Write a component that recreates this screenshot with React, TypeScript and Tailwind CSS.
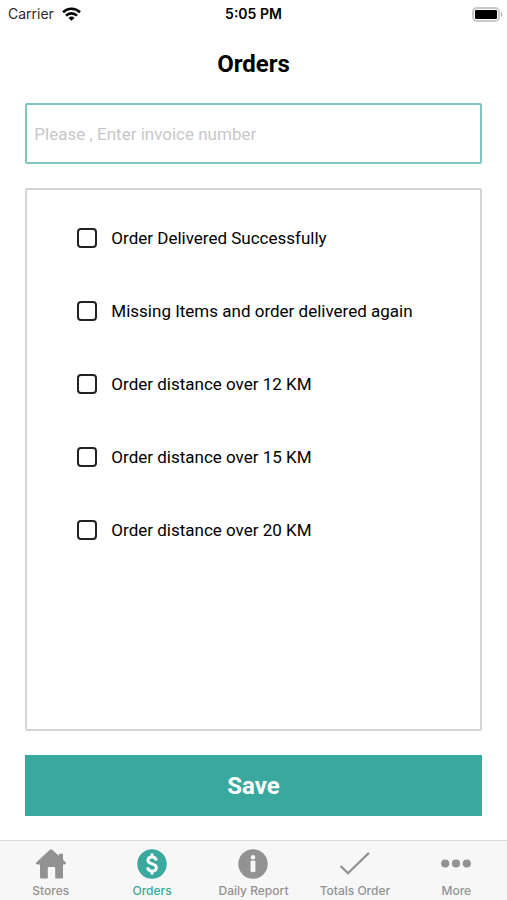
import { useState } from "react";

const reasons = [
  "Order Delivered Successfully",
  "Missing Items and order delivered again",
  "Order distance over 12 KM",
  "Order distance over 15 KM",
  "Order distance over 20 KM",
];

function WifiIcon() {
  return (
    <svg width="19" height="14" viewBox="0 0 19 14" aria-hidden="true">
      <g fill="none" stroke="#000" strokeWidth="2.6">
        <path d="M1 5.2a12.2 12.2 0 0 1 17 0" />
        <path d="M4 8.6a7.9 7.9 0 0 1 11 0" />
      </g>
      <path d="M9.5 13.8 6.5 10.9a4.3 4.3 0 0 1 6 0Z" />
    </svg>
  );
}

function BatteryIcon() {
  return (
    <svg width="31" height="15" viewBox="0 0 31 15" aria-hidden="true">
      <rect x="1" y="1" width="26" height="13" rx="4" fill="#fff" stroke="#c8c8c8" strokeWidth="2" />
      <rect x="3" y="3" width="22" height="9" rx="1.2" />
      <path d="M28.8 5.2c2.2.6 2.2 4 0 4.6Z" fill="#b5b5b5" />
    </svg>
  );
}

function HomeIcon() {
  return (
    <svg width="30" height="30" viewBox="0 0 30 30" fill="currentColor" aria-hidden="true">
      <path d="M13.9.8a1.6 1.6 0 0 1 2.2 0L22.8 6.8V5.5c0-.5.3-.8.8-.8h2.6c.5 0 .8.3.8.8v5.2l2.6 2.5c.9.9.4 2.2-.9 2.2H27v12.8c0 .8-.5 1.3-1.3 1.3H20c-.5 0-.8-.3-.8-.8V19c0-.7-.4-1.1-1.1-1.1h-5.2c-.7 0-1.1.4-1.1 1.1v9.7c0 .5-.3.8-.8.8H5.3c-.8 0-1.3-.5-1.3-1.3V15.4H1.300c-1.300 0-1.800-1.300-.9-2.200Z" />
    </svg>
  );
}

function DollarIcon() {
  return (
    <svg width="30" height="30" viewBox="0 0 30 30" aria-hidden="true">
      <circle cx="15" cy="15" r="14.7" fill="currentColor" />
      <path
        d="M19.3 11.5c-.4-2.3-1.9-3.5-4.2-3.5-2.4 0-4.2 1.2-4.2 3.3 0 4.7 8.5 2.6 8.5 7.3 0 2.2-1.8 3.5-4.3 3.5s-4.2-1.2-4.5-3.7"
        fill="none"
        stroke="#fff"
        strokeWidth="2.9"
      />
      <path d="M15 4.6v3.8M15 21.5v4" stroke="#fff" strokeWidth="2.8" />
    </svg>
  );
}

function InfoIcon() {
  return (
    <svg width="30" height="30" viewBox="0 0 30 30" aria-hidden="true">
      <circle cx="15" cy="15" r="14.7" fill="currentColor" />
      <circle cx="15" cy="8.3" r="2.2" fill="#f7f7f7" />
      <path d="M13 12h4v10.6h-4Z" fill="#f7f7f7" stroke="#f7f7f7" strokeWidth=".8" strokeLinejoin="round" />
    </svg>
  );
}

function CheckIcon() {
  return (
    <svg width="30" height="30" viewBox="0 0 30 30" aria-hidden="true">
      <path d="M.6 17 8 24.3 28.9 3.9" fill="none" stroke="currentColor" strokeWidth="2.2" />
    </svg>
  );
}

function MoreIcon() {
  return (
    <svg width="30" height="30" viewBox="0 0 30 30" fill="currentColor" aria-hidden="true">
      <circle cx="4.2" cy="14.5" r="4.1" />
      <circle cx="15" cy="14.5" r="4.1" />
      <circle cx="25.8" cy="14.5" r="4.1" />
    </svg>
  );
}

const tabs = [
  { label: "Stores", icon: HomeIcon },
  { label: "Orders", icon: DollarIcon },
  { label: "Daily Report", icon: InfoIcon },
  { label: "Totals Order", icon: CheckIcon },
  { label: "More", icon: MoreIcon },
];

export default function App() {
  const [invoice, setInvoice] = useState("");
  const [checked, setChecked] = useState<string[]>([]);
  const [active, setActive] = useState("Orders");

  function toggle(reason: string) {
    setChecked((prev) =>
      prev.includes(reason) ? prev.filter((r) => r !== reason) : [...prev, reason]
    );
  }

  return (
    <div className="flex min-h-screen flex-col bg-white font-['Roboto',sans-serif] text-black">
      {/* Status bar */}
      <div className="grid h-7 grid-cols-3 items-center px-2 font-['Inter',sans-serif] text-sm">
        <div className="flex items-center gap-2 text-[#2b2b2b]">
          <span>Carrier</span>
          <WifiIcon />
        </div>
        <span className="text-center font-semibold">5:05 PM</span>
        <div className="-mr-1 flex justify-end">
          <BatteryIcon />
        </div>
      </div>

      <form
        className="flex flex-1 flex-col px-[5%] pb-6"
        onSubmit={(e) => e.preventDefault()}
      >
        <h1 className="py-5 text-center text-2xl font-bold">Orders</h1>

        <input
          type="text"
          aria-label="Invoice number"
          placeholder="Please , Enter invoice number"
          value={invoice}
          onChange={(e) => setInvoice(e.target.value)}
          className="mt-[3px] h-[61px] w-full rounded-xs border-2 border-[#7fc6c0] px-[7px] text-[17px] outline-none placeholder:text-[#c7c7cb]"
        />

        {/* Reasons */}
        <div className="mt-6 flex flex-1 flex-col gap-[49px] rounded-xs border-2 border-[#d4d4d4] px-[50px] pt-9">
          {reasons.map((reason) => (
            <label key={reason} className="flex items-center gap-3.5 text-[17px] leading-6">
              <input
                type="checkbox"
                checked={checked.includes(reason)}
                onChange={() => toggle(reason)}
                className="size-5 shrink-0 appearance-none rounded-sm border-2 border-[#222222] checked:bg-[#39a9a0]"
              />
              {reason}
            </label>
          ))}
        </div>

        <button
          type="submit"
          className="mt-6 h-[61px] w-full bg-[#39a9a0] text-2xl font-bold text-white"
        >
          Save
        </button>
      </form>

      {/* Tabs */}
      <nav className="grid h-[60px] grid-cols-5 border-t border-[#d8d8d8] bg-[#f7f7f7] font-['Inter',sans-serif]">
        {tabs.map(({ label, icon: Icon }) => (
          <button
            key={label}
            type="button"
            onClick={() => setActive(label)}
            className={`flex flex-col items-center gap-1 pt-2 text-xs leading-4 font-medium whitespace-nowrap ${
              active === label ? "text-[#39a9a0]" : "text-[#929292]"
            }`}
          >
            <Icon />
            {label}
          </button>
        ))}
      </nav>
    </div>
  );
}
